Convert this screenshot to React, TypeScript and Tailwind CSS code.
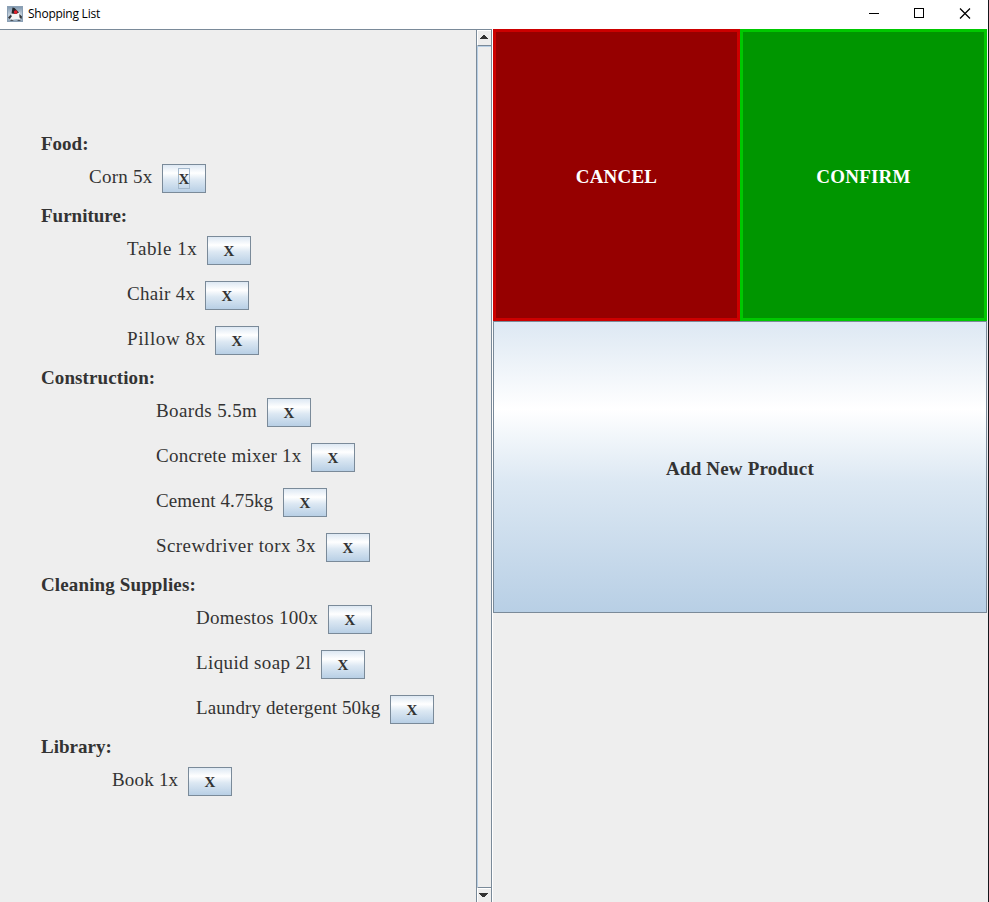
import React from "react";

type Item = { label: string; fit: string };
type Group = { title: string; fit: string; indent: string; items: Item[] };

const groups: Group[] = [
  { title: "Food:", fit: "tracking-normal", indent: "pl-[89px]", items: [{ label: "Corn 5x", fit: "w-[73px] tracking-[0.25px]" }] },
  {
    title: "Furniture:",
    fit: "tracking-normal",
    indent: "pl-[127px]",
    items: [
      { label: "Table 1x", fit: "w-[80px] tracking-[0.6px]" },
      { label: "Chair 4x", fit: "w-[78px] tracking-[0.3px]" },
      { label: "Pillow 8x", fit: "w-[88px] tracking-[0.6px]" },
    ],
  },
  {
    title: "Construction:",
    fit: "tracking-[0.1px]",
    indent: "pl-[156px]",
    items: [
      { label: "Boards 5.5m", fit: "w-[111px] tracking-[0.37px]" },
      { label: "Concrete mixer 1x", fit: "w-[155px] tracking-[0.24px]" },
      { label: "Cement 4.75kg", fit: "w-[127px] tracking-[0.08px]" },
      { label: "Screwdriver torx 3x", fit: "w-[170px] tracking-[0.42px]" },
    ],
  },
  {
    title: "Cleaning Supplies:",
    fit: "tracking-[0.13px]",
    indent: "pl-[196px]",
    items: [
      { label: "Domestos 100x", fit: "w-[132px] tracking-[0.25px]" },
      { label: "Liquid soap 2l", fit: "w-[125px] tracking-[0.38px]" },
      { label: "Laundry detergent 50kg", fit: "w-[194px] tracking-[0.1px]" },
    ],
  },
  { title: "Library:", fit: "tracking-normal", indent: "pl-[112px]", items: [{ label: "Book 1x", fit: "w-[76px] tracking-[0.2px]" }] },
];

const metal = "bg-[linear-gradient(to_bottom,#dde8f3_0%,#ffffff_30%,#dce8f3_55%,#b8cfe5_100%)]";

function RemoveButton({ focused }: { focused: boolean }) {
  return (
    <button
      className={`flex h-[29px] w-[44px] shrink-0 items-center justify-center border border-[#7a8a99] ${metal} text-[15px] font-bold leading-[18px]`}
    >
      <span
        className={`flex h-[21px] w-[12px] items-center justify-center border pt-px ${focused ? "border-[#a3b8cc]" : "border-transparent"}`}
      >
        X
      </span>
    </button>
  );
}

function DukeIcon() {
  return (
    <svg width="16" height="16" viewBox="0 0 16 16" className="shrink-0">
      <defs>
        <linearGradient id="duke" x1="0" y1="0" x2="0" y2="1">
          <stop offset="0" stopColor="#7f97ae" />
          <stop offset="0.55" stopColor="#c3d0dc" />
          <stop offset="1" stopColor="#8fa4b8" />
        </linearGradient>
      </defs>
      <rect x="0.5" y="0.5" width="15" height="15" fill="url(#duke)" stroke="#8ba0b5" />
      <path d="M4 7.5 L12.5 6 L13 14 L10 13 L7 13.5 L3.5 14Z" fill="#f4f4f4" />
      <path d="M5.5 1.5 L7.5 2 L12 6.5 L9 8 L4.5 7.5Z" fill="#24262a" />
      <path d="M1 11.5 L4 8.5 L4.8 10.5 L2.5 13Z M12.3 8 L15 10.5 L14.5 13 L12.5 11.5Z" fill="#34373b" />
      <path d="M3 14.7 L4.5 13.6 L7 14.7Z M10 14.7 L12 13.6 L14 14.7Z" fill="#34373b" />
      <circle cx="8.7" cy="6.1" r="1.9" fill="#e0202a" />
    </svg>
  );
}

function ScrollBar() {
  return (
    <div className="flex w-[16px] shrink-0 flex-col border-x border-[#7a8a99] bg-[#eeeeee]">
      <div className="flex h-[16px] shrink-0 items-start border-l border-t border-white border-b border-b-[#7a8a99] pl-[2px] pt-[4px]">
        <svg width="8" height="4" viewBox="0 0 8 4" shapeRendering="crispEdges">
          <path d="M3 0h2v1h1v1h1v1h1v1H0V3h1V2h1V1h1z" fill="#333333" />
        </svg>
      </div>
      <div className="flex-1 border-l border-t border-[#b8cfe5]" />
      <div className="flex h-[15px] shrink-0 items-start border-l border-l-white border-t border-t-[#7a8a99]">
        <div className="flex h-full w-full items-start border-t border-white pl-px">
          <svg width="9" height="9" viewBox="0 1 9 9" shapeRendering="crispEdges">
            <path d="M0 5h9v1H8v1H7v1H6v1H3V8H2V7H1V6H0z" fill="#333333" />
          </svg>
        </div>
      </div>
    </div>
  );
}

export default function App() {
  return (
    <div className="flex h-[902px] w-[989px] flex-col overflow-hidden border-r border-[#15171c] bg-[#eeeeee] font-['Liberation_Serif',serif] text-[19px] leading-[22px] text-[#333333]">
      <header className="flex h-[29px] shrink-0 items-center bg-white pl-[7px] pb-[2px] font-['Open_Sans','Noto_Sans',sans-serif] text-[12px] tracking-[-0.25px] text-black">
        <DukeIcon />
        <span className="ml-[5px] flex-1 pt-px">Shopping List</span>
        <svg width="102" height="11" viewBox="0 0 102 11" className="mr-[17px]" fill="none" stroke="#000000">
          <path d="M0 5.5h10" />
          <rect x="45.5" y="0.5" width="9" height="9" />
          <path d="M91 0.5l10 10M101 0.5l-10 10" strokeWidth="1.25" />
        </svg>
      </header>
      <div className="flex min-h-0 flex-1">
        <main className="w-[476px] shrink-0 border-t border-[#7a8a99] pt-[99px]">
          {groups.map((group, g) => (
            <section key={group.title}>
              <h2 className={`flex h-[27px] items-center pl-[41px] pt-[3px] font-bold ${group.fit}`}>{group.title}</h2>
              {group.items.map((item) => (
                <div key={item.label} className={`flex h-[45px] items-center ${group.indent}`}>
                  <span className={`${item.fit} shrink-0 whitespace-nowrap pb-[3px]`}>{item.label}</span>
                  <RemoveButton focused={g === 0} />
                </div>
              ))}
            </section>
          ))}
        </main>
        <div className="flex border-t border-[#7a8a99]">
          <ScrollBar />
        </div>
        <aside className="w-[495px] shrink-0 border-l border-white">
          <div className="flex h-[292px] font-bold tracking-[0.2px] text-white">
            <button className="w-[247px] border-[3px] border-[#cc0000] bg-[#960000] pt-[3px]">CANCEL</button>
            <button className="w-[247px] border-[3px] border-[#00c800] bg-[#009600] pt-[3px]">CONFIRM</button>
          </div>
          <button className={`h-[292px] w-full border border-[#7a8a99] ${metal} pt-[3px] font-bold tracking-[0.17px]`}>
            Add New Product
          </button>
        </aside>
      </div>
    </div>
  );
}
